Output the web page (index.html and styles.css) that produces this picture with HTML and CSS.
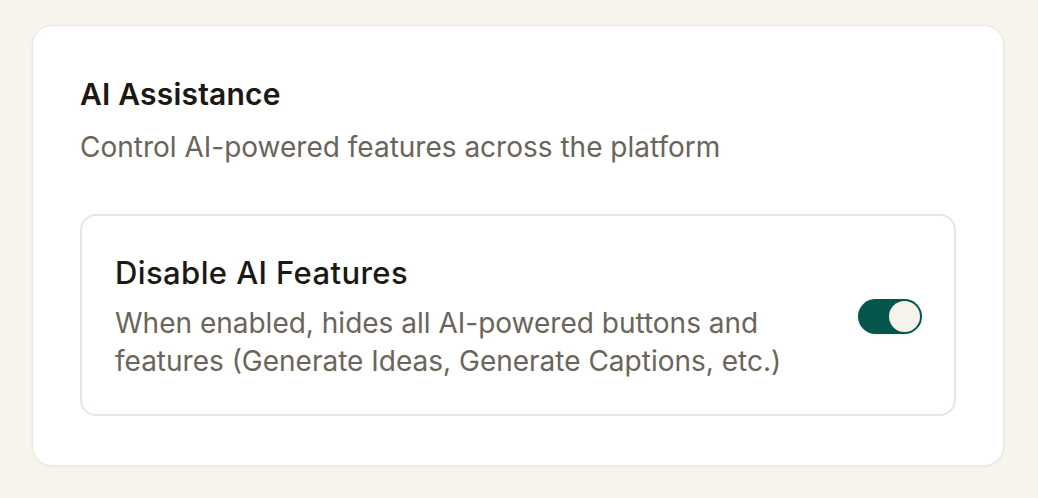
FILE: index.html
```html
<!DOCTYPE html>
<html lang="en">
<head>
<meta charset="utf-8">
<title>AI Assistance</title>
<link rel="stylesheet" href="styles.css">
</head>
<body>
  <section class="card">
    <h2 class="card-title">AI Assistance</h2>
    <p class="card-subtitle">Control AI-powered features across the platform</p>
    <div class="setting">
      <div class="setting-text">
        <h3 class="setting-title">Disable AI Features</h3>
        <p class="setting-desc">When enabled, hides all AI-powered buttons and features (Generate Ideas, Generate Captions, etc.)</p>
      </div>
      <button class="toggle is-on" type="button" aria-pressed="true" aria-label="Disable AI Features">
        <span class="toggle-knob"></span>
      </button>
    </div>
  </section>
</body>
</html>
```
FILE: styles.css
```css
* { box-sizing: border-box; }
html, body { margin: 0; }
body {
  background: #f7f4ee;
  font-family: Inter, "Noto Sans", "Liberation Sans", sans-serif;
  padding: 25px 34px 32px 32px;
  -webkit-font-smoothing: antialiased;
}
.card {
  background: #ffffff;
  border: 1px solid #ebe8e2;
  border-radius: 20px;
  box-shadow: 0 1px 3px rgba(60, 50, 30, 0.06);
  padding: 48px 47px 49px 47px;
}
.card-title {
  margin: 0;
  font-size: 30px;
  line-height: 40px;
  font-weight: 600;
  color: #1c1814;
  letter-spacing: 0.2px;
}
.card-subtitle {
  margin: 15px 0 0;
  font-size: 28px;
  line-height: 36px;
  color: #6b6459;
}
.setting {
  margin-top: 49px;
  border: 2px solid #e7e5ea;
  border-radius: 16px;
  padding: 37px 32px 34px 33px;
  height: 202px;
  display: flex;
  align-items: center;
  justify-content: space-between;
  gap: 32px;
}
.setting-text { max-width: 700px; }
.setting-title {
  margin: 0;
  font-size: 31px;
  line-height: 40px;
  font-weight: 500;
  letter-spacing: 0.4px;
  color: #1c1814;
}
.setting-desc {
  margin: 11px 0 0;
  font-size: 28px;
  line-height: 38px;
  color: #6b6459;
}
.toggle {
  flex: none;
  width: 64px;
  height: 35px;
  border: none;
  padding: 2px;
  border-radius: 18px;
  background: #04564c;
  display: flex;
  align-items: center;
  justify-content: flex-end;
  cursor: pointer;
  box-shadow: 0 1px 3px rgba(0, 0, 0, 0.08);
}
.toggle-knob {
  width: 31px;
  height: 31px;
  border-radius: 50%;
  background: #f6f3eb;
}
```
